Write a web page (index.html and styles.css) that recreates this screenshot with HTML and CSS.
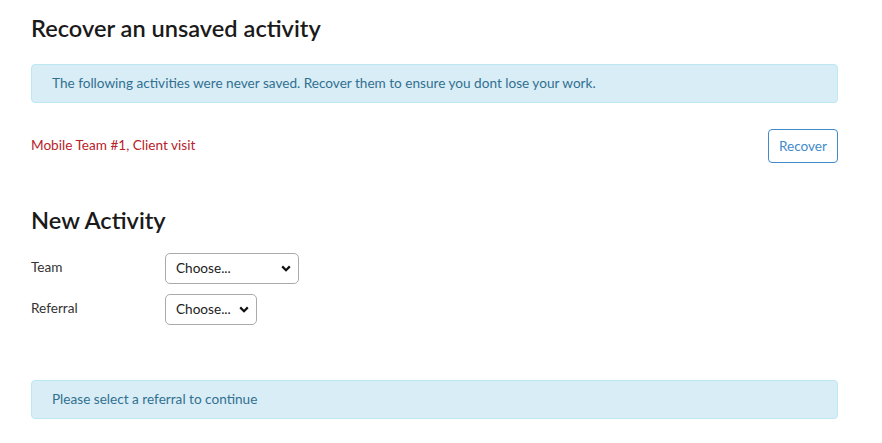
FILE: index.html
```html
<!DOCTYPE html>
<html lang="en">
<head>
  <meta charset="UTF-8">
  <title>New Activity</title>
  <link rel="stylesheet" href="styles.css">
</head>
<body>
  <div class="page">

    <h1>Recover an unsaved activity</h1>
    <div class="alert-info">
      The following activities were never saved. Recover them to ensure you dont lose your work.
    </div>

    <div class="unsaved-row">
      <span class="unsaved-name">Mobile Team #1, Client visit</span>
      <button class="btn-outline" type="button">Recover</button>
    </div>

    <h2>New Activity</h2>
    <div class="form-row">
      <label for="team">Team</label>
      <span class="select-wrap">
        <select id="team" class="select-team">
          <option>Choose...</option>
        </select>
        <svg class="chevron" width="10" height="7" viewBox="0 0 10 7"><path d="M1.2 1.4 5 5.2 8.8 1.4" fill="none" stroke="#111" stroke-width="2.2"/></svg>
      </span>
    </div>
    <div class="form-row">
      <label for="referral">Referral</label>
      <span class="select-wrap">
        <select id="referral" class="select-referral">
          <option>Choose...</option>
        </select>
        <svg class="chevron" width="10" height="7" viewBox="0 0 10 7"><path d="M1.2 1.4 5 5.2 8.8 1.4" fill="none" stroke="#111" stroke-width="2.2"/></svg>
      </span>
    </div>

    <div class="alert-info alert-bottom">
      Please select a referral to continue
    </div>

  </div>
</body>
</html>
```

FILE: styles.css
```css
:root {
  --info-bg: #d9edf7;
  --info-border: #bce8f1;
  --info-text: #31708f;
  --danger: #b8222a;
  --link-blue: #428bca;
  --text: #222;
}

body {
  margin: 0;
  font-family: Lato, 'Open Sans', sans-serif;
  font-size: 13.6px;
  color: var(--text);
  background: #fff;
}

.page {
  width: 807px;
  margin-left: 31px;
  padding-top: 16px;
}

h1, h2 {
  font-size: 23.6px;
  font-weight: 600;
  line-height: 1.1;
  margin: 0;
  color: #1a1a1a;
}

h2 {
  margin-top: 45px;
  margin-bottom: 19px;
}

.alert-info {
  background-color: var(--info-bg);
  border: 1px solid var(--info-border);
  color: var(--info-text);
  border-radius: 4px;
  padding: 10px 20px;
  line-height: 17px;
  margin-top: 22px;
}

.unsaved-row {
  display: flex;
  justify-content: space-between;
  align-items: center;
  margin-top: 26px;
}

.unsaved-name {
  color: var(--danger);
  padding-bottom: 2px;
}

.btn-outline {
  font-family: inherit;
  font-size: 13.6px;
  line-height: 18px;
  padding: 7px 10px;
  background: #fff;
  color: var(--link-blue);
  border: 1px solid var(--link-blue);
  border-radius: 4px;
}

.form-row {
  display: flex;
  align-items: center;
  margin-bottom: 10px;
}

.form-row label {
  width: 134px;
  color: #333;
  padding-bottom: 2px;
}

.select-wrap {
  position: relative;
  display: inline-flex;
}

.form-row select {
  appearance: none;
  -webkit-appearance: none;
  font-family: inherit;
  font-size: 13.6px;
  height: 31px;
  padding: 0 24px 0 10px;
  border: 1px solid #aaa;
  border-radius: 5px;
  background: #fff;
  color: #222;
}

.chevron {
  position: absolute;
  right: 8px;
  top: 12px;
  pointer-events: none;
}

.select-team {
  width: 134px;
}

.select-referral {
  width: 92px;
}

.alert-bottom {
  margin-top: 55px;
}
```
